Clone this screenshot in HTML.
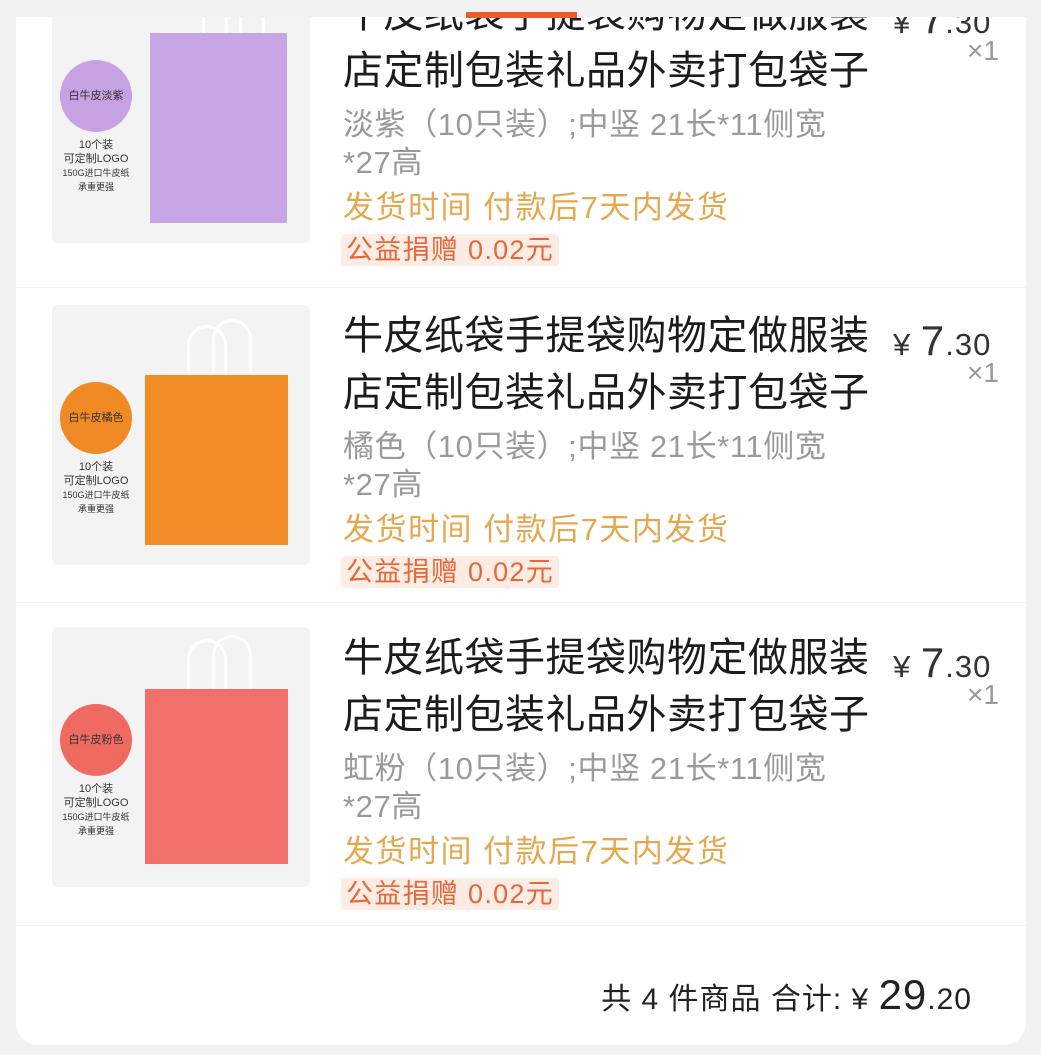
<!DOCTYPE html>
<html><head><meta charset="utf-8"><style>
*{margin:0;padding:0;box-sizing:border-box}
body{width:1041px;height:1055px;background:#f2f2f2;position:relative;overflow:hidden;font-family:"Liberation Sans","Noto Sans CJK SC",sans-serif}
.card{position:absolute;left:16px;top:0;width:1010px;height:1045px;background:#fff;border-radius:0 0 22px 22px;overflow:hidden}
.topgray{position:absolute;left:0;top:0;width:1041px;height:17px;background:#f2f2f2;z-index:5}
.bar{position:absolute;left:466px;top:12px;width:111px;height:6px;background:#ef5a2a;z-index:6}
.it{position:absolute;left:0;width:1041px;height:300px}
.img{position:absolute;left:52px;top:0;width:258px;height:260px;background:#f3f3f3;border-radius:6px;overflow:hidden}
.circ{position:absolute;left:8px;top:77px;width:72px;height:72px;border-radius:50%;font-size:11px;color:#333;text-align:center;line-height:72px}
.lbl{position:absolute;left:0;top:155px;width:88px;text-align:center;color:#333;line-height:14px}
.bag{position:absolute;left:93px;top:70px;width:143px;height:170px}
.hand{position:absolute;border:3px solid #fff;border-bottom:none;border-radius:30px 30px 0 0;width:40px;height:62px;top:12px}
.t{position:absolute;left:343px;top:3px;font-size:40px;line-height:57px;color:#1c1c1c;width:560px;letter-spacing:0.5px;white-space:nowrap}
.s{position:absolute;left:343px;top:123px;font-size:31px;line-height:38px;color:#9a9a9a;width:520px;letter-spacing:0.6px;white-space:nowrap}
.sh{position:absolute;left:343px;top:206px;font-size:31px;line-height:38px;color:#e3a850;letter-spacing:1.5px;white-space:nowrap}
.tag{position:absolute;left:341px;top:251px;height:32px;padding:0 5px;background:#fdece4;color:#e4683a;font-size:27px;line-height:32px;border-radius:4px;letter-spacing:1.3px}
.p{position:absolute;left:893px;top:12px;color:#333;font-size:31px;white-space:nowrap;letter-spacing:1px}
.p b{font-weight:normal;font-size:42px}
.x{position:absolute;left:967px;top:52px;color:#999;font-size:28px}
.sep{position:absolute;left:16px;width:1010px;height:1px;background:#f4f4f4}
</style></head><body>
<div class="card"></div>
<div class="topgray"></div><div class="bar"></div>

<div class="it" style="top:-17px">
 <div class="img">
  <div class="circ" style="background:#c6a2e2">白牛皮淡紫</div>
  <div class="lbl"><div style="font-size:11px">10个装</div><div style="font-size:11px">可定制LOGO</div><div style="font-size:9px">150G进口牛皮纸</div><div style="font-size:9px">承重更强</div></div>
  <div class="hand" style="left:150px;top:15px"></div><div class="hand" style="left:173px;top:15px"></div>
  <div class="bag" style="background:#c9a6e6;left:98px;top:50px;width:137px;height:190px"></div>
 </div>
 <div class="t">牛皮纸袋手提袋购物定做服装<br>店定制包装礼品外卖打包袋子</div>
 <div class="s">淡紫（10只装）;中竖 21长*11侧宽<br>*27高</div>
 <div class="sh">发货时间 付款后7天内发货</div>
 <div class="tag">公益捐赠 0.02元</div>
 <div class="p">¥ <b>7</b>.30</div><div class="x">×1</div>
</div>
<div class="sep" style="top:287px"></div>

<div class="it" style="top:305px">
 <div class="img">
  <div class="circ" style="background:#f08a25">白牛皮橘色</div>
  <div class="lbl"><div style="font-size:11px">10个装</div><div style="font-size:11px">可定制LOGO</div><div style="font-size:9px">150G进口牛皮纸</div><div style="font-size:9px">承重更强</div></div>
  <div class="hand" style="left:135px;top:20px"></div><div class="hand" style="left:160px;top:14px"></div>
  <div class="bag" style="background:#f28e28"></div>
 </div>
 <div class="t">牛皮纸袋手提袋购物定做服装<br>店定制包装礼品外卖打包袋子</div>
 <div class="s">橘色（10只装）;中竖 21长*11侧宽<br>*27高</div>
 <div class="sh">发货时间 付款后7天内发货</div>
 <div class="tag">公益捐赠 0.02元</div>
 <div class="p">¥ <b>7</b>.30</div><div class="x">×1</div>
</div>
<div class="sep" style="top:602px"></div>

<div class="it" style="top:627px">
 <div class="img">
  <div class="circ" style="background:#ef6b62">白牛皮粉色</div>
  <div class="lbl"><div style="font-size:11px">10个装</div><div style="font-size:11px">可定制LOGO</div><div style="font-size:9px">150G进口牛皮纸</div><div style="font-size:9px">承重更强</div></div>
  <div class="hand" style="left:135px;top:12px"></div><div class="hand" style="left:160px;top:8px"></div>
  <div class="bag" style="background:#f1706a;top:62px;height:175px"></div>
 </div>
 <div class="t">牛皮纸袋手提袋购物定做服装<br>店定制包装礼品外卖打包袋子</div>
 <div class="s">虹粉（10只装）;中竖 21长*11侧宽<br>*27高</div>
 <div class="sh">发货时间 付款后7天内发货</div>
 <div class="tag">公益捐赠 0.02元</div>
 <div class="p">¥ <b>7</b>.30</div><div class="x">×1</div>
</div>
<div class="sep" style="top:925px"></div>

<div style="position:absolute;right:69px;top:970px;font-size:30px;color:#222;white-space:nowrap;line-height:50px;letter-spacing:1px">共 4 件商品 合计: ¥ <span style="font-size:42px">29</span>.20</div>
</body></html>
